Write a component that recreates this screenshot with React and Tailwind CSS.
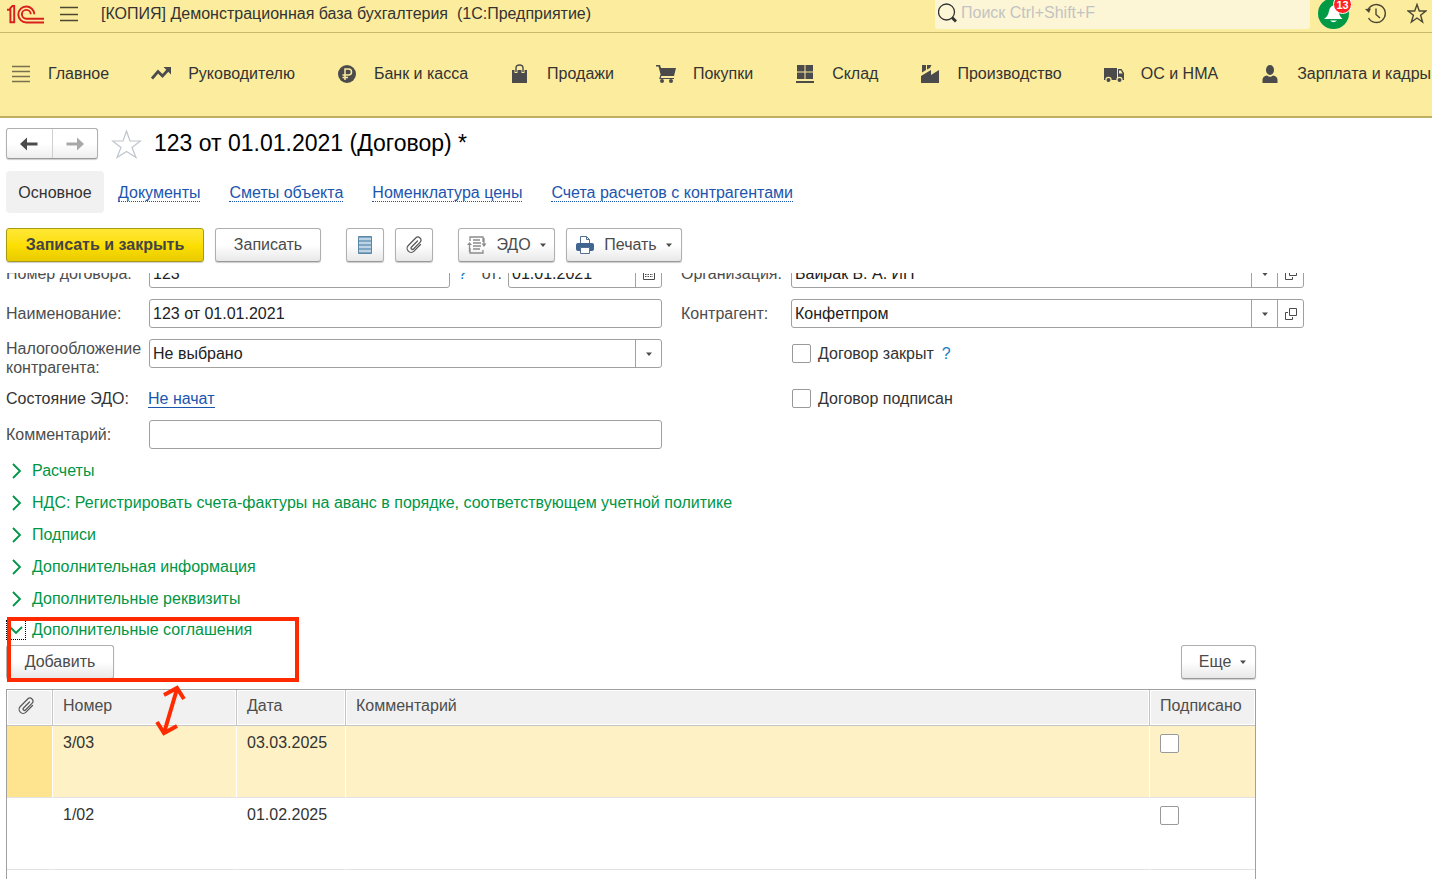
import React, { useEffect, useState } from "react";

const NAV_ITEMS = [
  { title: "Главное", icon: "menu" },
  { title: "Руководителю", icon: "trend" },
  { title: "Банк и касса", icon: "ruble" },
  { title: "Продажи", icon: "bag" },
  { title: "Покупки", icon: "cart" },
  { title: "Склад", icon: "stock" },
  { title: "Производство", icon: "factory" },
  { title: "ОС и НМА", icon: "truck" },
  { title: "Зарплата и кадры", icon: "person" },
];

const TABS = ["Документы", "Сметы объекта", "Номенклатура цены", "Счета расчетов с контрагентами"];

const GROUPS = [
  "Расчеты",
  "НДС: Регистрировать счета-фактуры на аванс в порядке, соответствующем учетной политике",
  "Подписи",
  "Дополнительная информация",
  "Дополнительные реквизиты",
];

const ROWS = [
  { number: "3/03", date: "03.03.2025" },
  { number: "1/02", date: "01.02.2025" },
];

const NAV_ICONS = {
  menu: <path d="M1 2.5h18M1 7.5h18M1 12.5h18M1 17.5h18" stroke="#77714f" strokeWidth="1.3" />,
  trend: (
    <>
      <path d="M1 14.5l6-7 4.5 4.500 6-6.500" fill="none" stroke="#4b4b4b" strokeWidth="2.8" />
      <path d="M12.500 3H20v7.500z" fill="#4b4b4b" />
    </>
  ),
  ruble: (
    <>
      <circle cx="10" cy="10" r="9" fill="#4b4b4b" />
      <path d="M8 16V5h3.5a3 3 0 0 1 0 6H5.5M5.5 13.5H11" fill="none" stroke="#fbec9e" strokeWidth="1.5" />
    </>
  ),
  bag: (
    <>
      <path d="M2 6h15v13H2z" fill="#4b4b4b" />
      <path d="M6 9V4.5a3.5 3.5 0 0 1 7 0V9" fill="none" stroke="#fbec9e" strokeWidth="3" />
      <path d="M6 8V4a3.5 3 0 0 1 7 0v4" fill="none" stroke="#4b4b4b" strokeWidth="1.4" />
    </>
  ),
  cart: (
    <>
      <path d="M0 1h4l1 3h15l-2 8H5L2.5 2.5H0z" fill="#4b4b4b" />
      <path d="M5 11l-1 3.5h14" fill="none" stroke="#4b4b4b" strokeWidth="1.2" />
      <circle cx="6" cy="17" r="2" fill="#4b4b4b" />
      <circle cx="15" cy="17" r="2" fill="#4b4b4b" />
    </>
  ),
  stock: <path d="M2 1h7.5v6.5H2zM10.5 1H18v6.5h-7.500zM2 8.500h7.500V15H2zM10.500 8.500H18V15h-7.500zM1 17h18v2H1z" fill="#4b4b4b" />,
  factory: (
    <path d="M1 19v-7l10-6v5l8-5v13zM2 1h4v5L2 8.500zM7 1h4.500L10 4 7 5.500z" fill="#4b4b4b" />
  ),
  truck: (
    <>
      <path d="M0 4h13v12H0zM14 5h3.500L20 9v7h-6z" fill="#4b4b4b" />
      <path d="M15 6.500h2l1.500 3H15z" fill="#fbec9e" />
      <circle cx="4.500" cy="16" r="2.600" fill="#4b4b4b" stroke="#fbec9e" strokeWidth="1.200" />
      <circle cx="15.500" cy="16" r="2.600" fill="#4b4b4b" stroke="#fbec9e" strokeWidth="1.200" />
    </>
  ),
  person: (
    <>
      <ellipse cx="10" cy="6" rx="4" ry="5" fill="#4b4b4b" />
      <path d="M2.500 19v-3.500Q3 12 7 11.500q3 2.500 6 0 4 .5 4.500 4V19z" fill="#4b4b4b" />
    </>
  ),
};

const buttonClass =
  "flex h-[34px] items-center justify-center rounded-[3px] border border-[#b0b0b0] border-b-[#999] bg-linear-to-b from-white from-50% to-[#e8e8e8] text-[#4b4b4b] shadow-[0_1px_1px_#ccc]";
const fieldClass = "flex h-[29px] min-w-0 rounded-[3px] border border-[#a0a0a0] bg-white";
const inputClass = "min-w-0 flex-1 appearance-none bg-transparent px-[3px] text-[#222] outline-none";
const checkboxClass =
  "block size-[19px] shrink-0 appearance-none rounded-[2px] border border-[#999] bg-white";
const labelClass = "shrink-0 text-[#4d4d4d]";

function Logo() {
  return (
    <svg width="38" height="20" viewBox="0 0 38 20" fill="none" stroke="#d8201f" strokeWidth="1.900">
      <path d="M0 5.800H3.400V18.200H7.200V2H5.400L2.600 4.800" />
      <path d="M27.300 10.300a8 8 0 1 0-8 8.200H37" />
      <path d="M23.700 10.300a4.400 4.400 0 1 0-4.400 4.400H37" />
    </svg>
  );
}

function Caret() {
  return (
    <svg width="6" height="4" viewBox="0 0 6 4" aria-hidden="true">
      <path d="M0 .5h6L3 4z" fill="#4b4b4b" />
    </svg>
  );
}

function Clip() {
  return (
    <svg width="18" height="18" viewBox="0 0 18 18" fill="none" stroke="#555" strokeWidth="1.200" strokeLinecap="round">
      <path d="M12.500 5L6.500 11a1.300 1.300 0 0 0 2 2L15 6.300a3 3 0 0 0-4.300-4.300L3.300 9.500a4 4 0 0 0 5.700 5.700L15.500 8.500" />
    </svg>
  );
}

function OpenIcon() {
  return (
    <svg width="12" height="12" viewBox="0 0 12 12" fill="none" stroke="#4b4b4b">
      <path d="M4.500 .5h7v7h-7zM3 4.500H.5v7h7V9" />
    </svg>
  );
}

function SelectField({ id, value, withOpen }) {
  return (
    <div className={`${fieldClass} flex-1`}>
      <select id={id} className={inputClass} defaultValue={value}>
        <option>{value}</option>
      </select>
      <span className="flex w-[26px] items-center justify-center border-l border-[#a0a0a0]">
        <Caret />
      </span>
      {withOpen && (
        <button aria-label="Открыть" className="flex w-[26px] items-center justify-center border-l border-[#a0a0a0]">
          <OpenIcon />
        </button>
      )}
    </div>
  );
}

function TopBar() {
  return (
    <header className="flex h-[33px] items-start border-b border-[#c8b96a] pl-[7px]">
      <div className="flex h-[27px] items-center">
        <Logo />
        <button aria-label="Меню" className="ml-[15px]">
          <svg width="18" height="16" viewBox="0 0 18 16" stroke="#4b4733" strokeWidth="1.300">
            <path d="M0 1.500h18M0 8.500h18M0 14.500h18" />
          </svg>
        </button>
        <h1 className="ml-[23px] whitespace-pre text-[#333]">
          {"[КОПИЯ] Демонстрационная база бухгалтерия  (1С:Предприятие)"}
        </h1>
      </div>
      <label className="ml-auto flex h-[29px] w-[375px] items-center rounded-b-[3px] bg-[#fdf6d6] pb-[3px] pl-[3px]">
        <svg width="19" height="20" viewBox="0 0 19 20" fill="none" stroke="#333">
          <circle cx="8.500" cy="9" r="8" strokeWidth="1.300" />
          <path d="M14 14.500l4 4" strokeWidth="3" />
        </svg>
        <input
          aria-label="Поиск"
          placeholder="Поиск Ctrl+Shift+F"
          className="ml-1 min-w-0 flex-1 bg-transparent outline-none placeholder:text-[#c3c3c3]"
        />
      </label>
      <button aria-label="Уведомления" className="relative ml-2 h-[29px] w-8">
        <svg width="32" height="29" viewBox="0 0 32 29">
          <circle cx="15.500" cy="13.500" r="15.500" fill="#009a46" />
          <path d="M6 19q4-2.500 5-8 1-5 4.500-5.500 4 .5 5 5.500 1 5.500 4 8z" fill="#fff" />
          <path d="M12 20.500h7q-3.500 3.500-7 0z" fill="#fff" />
        </svg>
        <span className="absolute -top-[5px] left-[15px] flex size-[19px] items-center justify-center rounded-full border border-white bg-[#f22] text-[11px] font-bold text-white">
          13
        </span>
      </button>
      <button aria-label="История" className="mt-[3px] ml-[15px]">
        <svg width="21" height="21" viewBox="0 0 21 21" fill="none" stroke="#4b4733" strokeWidth="1.400">
          <path d="M3 7a9 9 0 1 1 .5 8M11 5.500v6l4 3.500" />
          <path d="M0 6l6-.5L4 10z" fill="#4b4733" stroke="none" />
        </svg>
      </button>
      <button aria-label="Избранное" className="mt-[3px] mr-[5px] ml-[21px]">
        <svg width="20" height="21" viewBox="0 0 20 21" fill="none" stroke="#4b4733" strokeWidth="1.400">
          <path d="M10 1.500l2.300 6.500h6.500l-5.200 4.200 2 6.800-5.600-4-5.600 4 2-6.800L1.200 8h6.500z" />
        </svg>
      </button>
    </header>
  );
}

function Sections() {
  return (
    <nav className="flex h-[85px] gap-[42px] overflow-hidden border-b-2 border-[#beb060] pt-[31px] pl-[11px]">
      {NAV_ITEMS.map((item) => (
        <a key={item.title} href="#" className="flex h-5 shrink-0 items-center gap-[17px] whitespace-nowrap text-[#333]">
          <svg width="20" height="20" viewBox="0 0 20 20">
            {NAV_ICONS[item.icon]}
          </svg>
          {item.title}
        </a>
      ))}
    </nav>
  );
}

function Toolbar() {
  return (
    <div className="mt-[15px] flex gap-[25px]">
      <div className="flex gap-[11px]">
        <button className="h-[34px] w-[198px] rounded-[3px] border border-[#a89a10] bg-linear-to-b from-[#ffe834] via-[#fddf00] to-[#e8cb00] font-bold text-[#444] shadow-[0_1px_1px_#ccc]">
          Записать и закрыть
        </button>
        <button className={`${buttonClass} w-[106px]`}>Записать</button>
      </div>
      <div className="flex gap-[11px]">
        <button aria-label="Реестр" className={`${buttonClass} w-[38px]`}>
          <svg width="14" height="18" viewBox="0 0 14 18">
            <path d="M.5 .5h13v17H.5z" fill="#7fa6c2" stroke="#5b87a6" />
            <path d="M1 3h12M1 7h12M1 11h12M1 15h12" stroke="#d3e4f0" strokeWidth="1.600" />
          </svg>
        </button>
        <button aria-label="Присоединенные файлы" className={`${buttonClass} w-[38px]`}>
          <Clip />
        </button>
      </div>
      <div className="flex gap-[11px]">
        <button className={`${buttonClass} w-[97px]`}>
          <svg width="20" height="18" viewBox="0 0 20 18" fill="none" stroke="#8c8c8c" strokeWidth="1.300">
            <path d="M3 5V1h13v5M3 12v5h13v-3M6 4h7M6 7h8M6 10h8M6 13h7M2.500 16V8M17 2v8" />
            <path d="M0 9l2.500-3L5 9zM14.500 7.500h5L17 11z" fill="#8c8c8c" stroke="none" />
          </svg>
          <span className="ml-[9px] mr-[9px]">ЭДО</span>
          <Caret />
        </button>
        <button className={`${buttonClass} w-[116px]`}>
          <svg width="18" height="18" viewBox="0 0 18 18">
            <path d="M4.500 8V.5h6l3 3V8" fill="#fff" stroke="#53718f" />
            <path d="M10.500 .5v3h3" fill="none" stroke="#53718f" />
            <rect y="7" width="18" height="8" rx="2" fill="#3f6590" />
            <path d="M4.500 11.500h9v6h-9z" fill="#fff" stroke="#53718f" />
          </svg>
          <span className="ml-[10px] mr-[9px]">Печать</span>
          <Caret />
        </button>
      </div>
    </div>
  );
}

function ContractForm() {
  return (
    <div className="mr-[128px] flex gap-[19px]">
      <div className="flex w-[656px] shrink-0 flex-col gap-[11px]">
        <div className="flex items-center">
          <label htmlFor="number" className={`${labelClass} w-[143px]`}>Номер договора:</label>
          <div className={`${fieldClass} w-[301px]`}>
            <input id="number" className={inputClass} defaultValue="123" />
          </div>
          <a href="#" className="ml-2 text-[#1a7dc0]">?</a>
          <label htmlFor="date" className={`${labelClass} ml-auto mr-[6px]`}>от:</label>
          <div className={`${fieldClass} w-[154px]`}>
            <input id="date" className={inputClass} defaultValue="01.01.2021" />
            <button aria-label="Календарь" className="flex w-[26px] items-center justify-center border-l border-[#a0a0a0]">
              <svg width="12" height="12" viewBox="0 0 12 12" fill="none" stroke="#4b4b4b">
                <path d="M.5 1.500h11v10H.5zM0 3.500h12" />
                <path d="M2 6.500h8M2 8.500h8" strokeDasharray="1.500 1" />
              </svg>
            </button>
          </div>
        </div>
        <div className="flex items-center">
          <label htmlFor="name" className={`${labelClass} w-[143px]`}>Наименование:</label>
          <div className={`${fieldClass} flex-1`}>
            <input id="name" className={inputClass} defaultValue="123 от 01.01.2021" />
          </div>
        </div>
        <div className="flex items-start">
          <label htmlFor="tax" className={`${labelClass} w-[143px] leading-[19px]`}>
            Налогообложение
            <br />
            контрагента:
          </label>
          <SelectField id="tax" value="Не выбрано" />
        </div>
        <div className="flex h-[21px] items-center">
          <span className="w-[142px] text-[#333]">Состояние ЭДО:</span>
          <a href="#" className="border-b border-[#1c55ae] leading-[17px] text-[#1c55ae]">Не начат</a>
        </div>
        <div className="flex items-center">
          <label htmlFor="comment" className={`${labelClass} w-[143px]`}>Комментарий:</label>
          <div className={`${fieldClass} flex-1`}>
            <input id="comment" className={inputClass} />
          </div>
        </div>
      </div>

      <div className="flex min-w-0 flex-1 flex-col gap-[11px]">
        <div className="flex items-center">
          <label htmlFor="org" className={`${labelClass} w-[110px]`}>Организация:</label>
          <SelectField id="org" value="Байрак Б. А. ИП" withOpen />
        </div>
        <div className="flex items-center">
          <label htmlFor="partner" className={`${labelClass} w-[110px]`}>Контрагент:</label>
          <SelectField id="partner" value="Конфетпром" withOpen />
        </div>
        <div className="flex h-[29px] items-center pl-[111px] text-[#333]">
          <input type="checkbox" id="closed" className={checkboxClass} />
          <label htmlFor="closed" className="ml-[7px]">Договор закрыт</label>
          <a href="#" className="ml-2 text-[#1a7dc0]">?</a>
        </div>
        <div className="mt-[5px] flex h-[29px] items-center pl-[111px] text-[#333]">
          <input type="checkbox" id="signed" className={checkboxClass} />
          <label htmlFor="signed" className="ml-[7px]">Договор подписан</label>
        </div>
      </div>
    </div>
  );
}

function Agreements() {
  const [selected, setSelected] = useState(0);
  const th = "border-r border-b border-[#c4c4c4] bg-[#f1f1f1] px-[10px] pb-[3px] text-left font-normal shadow-[inset_0_0_0_1px_#fff] last:border-r-0";
  const td = "border-r border-b border-r-white border-b-[#e2e2e2] px-[10px] pt-[7px] align-top last:border-r-0";

  return (
    <div className="relative">
      <button aria-expanded="true" className="flex h-[30px] items-center text-[#009646]">
        <span className="flex size-5 items-center justify-center border border-dotted border-black">
          <svg width="14" height="9" viewBox="0 0 14 9" fill="none" stroke="#009646" strokeWidth="1.800">
            <path d="M1 1l6 6 6-6" />
          </svg>
        </span>
        <span className="ml-[6px]">Дополнительные соглашения</span>
      </button>
      <div className="mr-[176px] flex justify-between">
        <button className={`${buttonClass} w-[108px]`}>Добавить</button>
        <button className={`${buttonClass} w-[75px]`}>
          <span className="mr-[9px] ml-2">Еще</span>
          <Caret />
        </button>
      </div>

      <div className="mt-[10px] mr-[176px] border-x border-t border-[#a0a0a0]">
        <table className="w-full table-fixed border-separate border-spacing-0">
          <colgroup>
            <col className="w-[46px]" />
            <col className="w-[184px]" />
            <col className="w-[109px]" />
            <col />
            <col className="w-[105px]" />
          </colgroup>
          <thead>
            <tr className="h-9 text-[#4d4d4d]">
              <th className={th} aria-label="Файлы"><Clip /></th>
              <th className={th}>Номер</th>
              <th className={th}>Дата</th>
              <th className={th}>Комментарий</th>
              <th className={th}>Подписано</th>
            </tr>
          </thead>
          <tbody className="text-[#333]">
            {ROWS.map((row, i) => (
              <tr
                key={row.number}
                onClick={() => setSelected(i)}
                className={`h-[72px] ${i === selected ? "bg-[#fdf1c5]" : "bg-white"}`}
              >
                <td className={`${td} ${i === selected ? "bg-[#fee48f]" : ""}`} />
                <td className={td}>{row.number}</td>
                <td className={td}>{row.date}</td>
                <td className={td} />
                <td className={td}>
                  <input
                    type="checkbox"
                    aria-label={`Подписано ${row.number}`}
                    className={`${checkboxClass} mt-px`}
                  />
                </td>
              </tr>
            ))}
            <tr className="h-[9px]">
              <td colSpan={5} className="p-0" />
            </tr>
          </tbody>
        </table>
      </div>

      {/* callout over the group and the arrow to the table */}
      <div className="pointer-events-none absolute top-[2px] left-px h-[65px] w-[292px] border-4 border-[#ff2a00]" />
      <svg
        className="pointer-events-none absolute top-[70px] left-[149px]"
        width="32"
        height="54"
        viewBox="0 0 32 54"
        fill="none"
        stroke="#ff2a00"
        strokeWidth="4"
      >
        <path d="M22 4L9 48" />
        <path d="M9 10l13-7 7 11M2 37l7 11 13-7" />
      </svg>
    </div>
  );
}

export default function App() {
  useEffect(() => {
    document.title = "123 от 01.01.2021 (Договор)";
  }, []);

  return (
    <div className="min-h-screen bg-white font-['Liberation_Sans',Arial,sans-serif] text-base leading-5">
      <div className="bg-[#fbec9e]">
        <TopBar />
        <Sections />
      </div>

      <main className="pt-[10px] pl-[6px]">
        <div className="flex h-[31px] items-center">
          <div className="flex h-[31px] w-[92px] rounded-[3px] border border-[#b0b0b0] border-b-[#999] bg-linear-to-b from-white from-50% to-[#eee] shadow-[0_1px_1px_#ccc]">
            <button aria-label="Назад" className="flex flex-1 items-center justify-center border-r border-[#d0d0d0]">
              <svg width="18" height="14" viewBox="0 0 18 14" fill="#4b4b4b">
                <path d="M0 7l7-6.500V5.500h10.500v3H7v5z" />
              </svg>
            </button>
            <button aria-label="Вперед" className="flex flex-1 items-center justify-center">
              <svg width="18" height="14" viewBox="0 0 18 14" fill="#a8a8a8">
                <path d="M18 7l-7-6.500V5.500H.5v3H11v5z" />
              </svg>
            </button>
          </div>
          <button aria-label="В избранное" className="ml-[13px]">
            <svg width="31" height="30" viewBox="0 0 31 30" fill="none" stroke="#bfc5cc" strokeWidth="1.200">
              <path d="M15.500 2l3.500 10h10.500l-8.500 6.500 4 10-9.500-6-9.500 6 4-10L1.500 12H12z" />
            </svg>
          </button>
          <h2 className="ml-3 pb-[2px] text-[23px] leading-7 text-black">123 от 01.01.2021 (Договор) *</h2>
        </div>

        <div className="mt-3 flex items-center gap-[29px]">
          <a href="#" className="-mr-[15px] flex h-[42px] w-[98px] items-center justify-center rounded-[4px] bg-[#f1f1f1] pt-px text-[#333]">
            Основное
          </a>
          {TABS.map((tab) => (
            <a key={tab} href="#" className="mt-[2px] border-b border-dotted border-[#1c55ae] leading-[17px] text-[#1c55ae]">
              {tab}
            </a>
          ))}
        </div>

        <Toolbar />

        {/* the form is scrolled a little under the toolbar */}
        <div className="mt-[11px] overflow-hidden">
          <div className="-mt-[14px]">
            <ContractForm />
            <div className="mt-[6px]">
              {GROUPS.map((group) => (
                <button key={group} aria-expanded="false" className="flex h-8 items-center text-[#009646]">
                  <svg width="20" height="16" viewBox="0 0 20 16" fill="none" stroke="#009646" strokeWidth="1.800">
                    <path d="M7 1l7 7-7 7" />
                  </svg>
                  <span className="ml-[6px]">{group}</span>
                </button>
              ))}
            </div>
            <Agreements />
          </div>
        </div>
      </main>
    </div>
  );
}
